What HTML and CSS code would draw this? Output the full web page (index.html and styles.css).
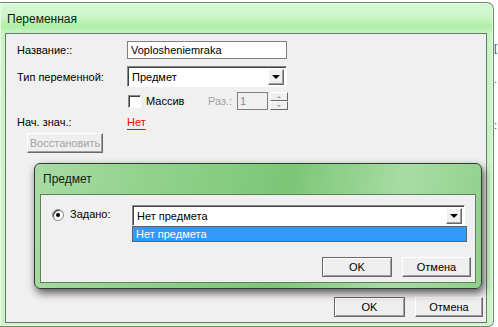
FILE: index.html
```html
<!DOCTYPE html>
<html lang="ru">
<head>
<meta charset="utf-8">
<link rel="stylesheet" href="styles.css">
</head>
<body>
<div class="desk">
  <div class="win">
    <div class="titlebar"><span class="title">Переменная</span></div>
    <div class="client">
      <div class="row r1">
        <span class="lbl">Название::</span>
        <div class="edit">Voplosheniemraka</div>
      </div>
      <div class="row r2">
        <span class="lbl">Тип переменной:</span>
        <div class="combo"><span class="combo-text">Предмет</span><span class="drop"><i class="tri"></i></span></div>
      </div>
      <div class="row r3">
        <span class="lbl"></span>
        <span class="check"></span><span class="chk-lbl">Массив</span>
        <span class="dis">Раз.:</span>
        <div class="spin-edit">1</div>
        <div class="spin"><span class="sb"><i class="up"></i></span><span class="sb"><i class="dn"></i></span></div>
      </div>
      <div class="row r4">
        <span class="lbl">Нач. знач.:</span>
        <span class="link">Нет</span>
      </div>
      <div class="row r5">
        <span class="btn disabled">Восстановить</span>
      </div>
      <div class="btnrow">
        <span class="btn def ok">OK</span>
        <span class="btn cancel">Отмена</span>
      </div>
    </div>

    <div class="dlg">
      <div class="dlg-title">Предмет</div>
      <div class="dlg-client">
        <div class="drow">
          <span class="radio"><i></i></span>
          <span class="rlbl">Задано:</span>
          <div class="dcombo-wrap">
            <div class="combo wide"><span class="combo-text">Нет предмета</span><span class="drop"><i class="tri"></i></span></div>
            <div class="list"><span class="sel">Нет предмета</span></div>
          </div>
        </div>
        <div class="dbtnrow">
          <span class="btn def ok2">OK</span>
          <span class="btn cancel2">Отмена</span>
        </div>
      </div>
    </div>
  </div>
  <div class="edge"><span class="e1">[</span><span class="e2">.</span><span class="e3">:</span></div>
</div>
</body>
</html>
```

FILE: styles.css
```css
* { box-sizing: border-box; }
html, body { margin: 0; padding: 0; }
body {
  width: 498px;
  height: 327px;
  overflow: hidden;
  background: #ffffff;
  font-family: "Liberation Sans", Arial, sans-serif;
  font-size: 11px;
  color: #000;
}
.desk { display: flex; width: 498px; height: 327px; }

.win {
  position: relative;
  width: 494px;
  height: 325px;
  margin-top: 2px;
  flex: none;
  background: linear-gradient(180deg, #d8f8d4 0px, #cdf5c8 14px, #aef0a6 23px, #c9f4c3 30px, #cdf3c8 100%);
  border: 1px solid #6e8a6e;
  border-left: none;
  border-radius: 0 7px 6px 0;
  box-shadow: inset 0 0 0 1px #e6fde3;
  display: flex;
  flex-direction: column;
}
.titlebar {
  height: 30px;
  padding: 9px 0 0 7px;
  flex: none;
}
.title { font-size: 12px; color: #101a10; }

.client {
  margin: 0 6px 0 5px;
  height: 290px;
  background: #f0f0f0;
  border: 1px solid #6a7a6a;
  padding: 7px 0 0 11px;
  display: flex;
  flex-direction: column;
}
.row { display: flex; align-items: center; }
.lbl { width: 110px; flex: none; }
.r1 { height: 18px; }
.r2 { height: 21px; margin-top: 7px; }
.r3 { height: 18px; margin-top: 5px; }
.r4 { height: 14px; margin-top: 5px; }
.r5 { margin-top: 4px; padding-left: 10px; }

.edit {
  width: 160px; height: 18px;
  background: #fff;
  border: 1px solid #7f7f7f;
  padding: 1px 3px;
  line-height: 14px;
}
.combo {
  width: 160px; height: 21px;
  background: #fff;
  border: 1px solid;
  border-color: #8a8a8a #fff #fff #8a8a8a;
  box-shadow: inset 1px 1px 0 #404040;
  display: flex; align-items: center;
  padding: 2px 2px 2px 4px;
}
.combo-text { flex: 1; line-height: 14px; }
.drop {
  width: 16px; height: 16px;
  background: #f0f0f0;
  border: 1px solid;
  border-color: #fff #696969 #696969 #fff;
  box-shadow: inset -1px -1px 0 #a0a0a0;
  display: flex; align-items: center; justify-content: center;
}
.tri {
  width: 0; height: 0;
  border-left: 4px solid transparent;
  border-right: 4px solid transparent;
  border-top: 4px solid #000;
  margin-top: 1px;
}
.check {
  width: 13px; height: 13px;
  background: #fff;
  border: 1px solid;
  border-color: #8a8a8a #fff #fff #8a8a8a;
  box-shadow: inset 1px 1px 0 #404040;
  margin-left: 1px;
}
.chk-lbl { margin-left: 5px; width: 62px; }
.dis { color: #a0a0a0; width: 29px; }
.spin-edit {
  width: 31px; height: 18px;
  border: 1px solid #7f7f7f;
  background: #f0f0f0;
  color: #8a8a9a;
  padding: 1px 2px;
  line-height: 14px;
}
.spin { display: flex; flex-direction: column; margin-left: 2px; }
.sb {
  width: 18px; height: 9px;
  background: #f0f0f0;
  border: 1px solid;
  border-color: #fff #696969 #696969 #fff;
  display: flex; align-items: center; justify-content: center;
}
.up, .dn { width: 0; height: 0; border-left: 2px solid transparent; border-right: 2px solid transparent; }
.up { border-bottom: 2px solid #a0a0a0; }
.dn { border-top: 2px solid #a0a0a0; }

.link {
  color: #ff0000;
  text-decoration: underline;
  text-decoration-thickness: 1px;
  text-underline-offset: 3px;
  line-height: 14px;
}

.btn {
  display: inline-flex; align-items: center; justify-content: center;
  height: 20px;
  background: #efefef;
  border: 1px solid;
  border-color: #fff #696969 #696969 #fff;
  box-shadow: inset -1px -1px 0 #a0a0a0;
}
.btn.disabled { width: 76px; color: #a3a3a3; }
.btn.def {
  border-color: #696969;
  box-shadow: inset 1px 1px 0 #fff, inset -1px -1px 0 #a0a0a0;
}
.btnrow {
  margin-top: auto;
  display: flex;
  justify-content: flex-end;
  gap: 10px;
  padding: 0 3px 5px 0;
}
.ok { width: 71px; }
.cancel { width: 68px; }

.dlg {
  position: absolute;
  left: 34px; top: 160px;
  width: 448px; height: 126px;
  border: 1px solid #2f3f2f;
  border-radius: 6px;
  background: linear-gradient(100deg, #a9dba5 0%, #92d28d 25%, #7cc677 55%, #a9dca5 80%, #8fd08a 100%);
  box-shadow: 2px 4px 9px rgba(0,0,0,0.65);
  display: flex; flex-direction: column;
}
.dlg-title {
  height: 30px;
  padding: 8px 0 0 8px;
  font-size: 12px;
  color: #0f1f0f;
  flex: none;
}
.dlg-client {
  margin: 0 5px 0 5px;
  height: 89px;
  background: #f0f0f0;
  border: 1px solid #5f7f5f;
  padding: 10px 0 0 11px;
  display: flex; flex-direction: column;
}
.drow { display: flex; align-items: flex-start; }
.radio {
  width: 12px; height: 12px;
  margin-top: 4px;
  border-radius: 50%;
  background: #fff;
  border: 1px solid #8a8a8a;
  box-shadow: inset 1px 1px 0 #404040;
  display: flex; align-items: center; justify-content: center;
}
.radio i { width: 4px; height: 4px; border-radius: 50%; background: #000; }
.rlbl { margin-left: 6px; width: 62px; margin-top: 3px; }
.dcombo-wrap { display: flex; flex-direction: column; }
.combo.wide { width: 333px; }
.list {
  width: 335px; height: 16px;
  border: 1px solid #646464;
  background: #3399ff;
  color: #fff;
  padding: 0 3px;
  line-height: 14px;
}
.dbtnrow {
  margin-top: auto;
  display: flex; justify-content: flex-end;
  gap: 10px;
  padding: 0 4px 5px 0;
}
.ok2 { width: 70px; }
.cancel2 { width: 69px; }

.edge {
  flex: 1;
  position: relative;
  color: #1a4fa0;
  font-size: 11px;
}
.edge span { position: absolute; left: 0; }
.e1 { top: 42px; }
.e2 { top: 73px; }
.e3 { top: 119px; }
```
